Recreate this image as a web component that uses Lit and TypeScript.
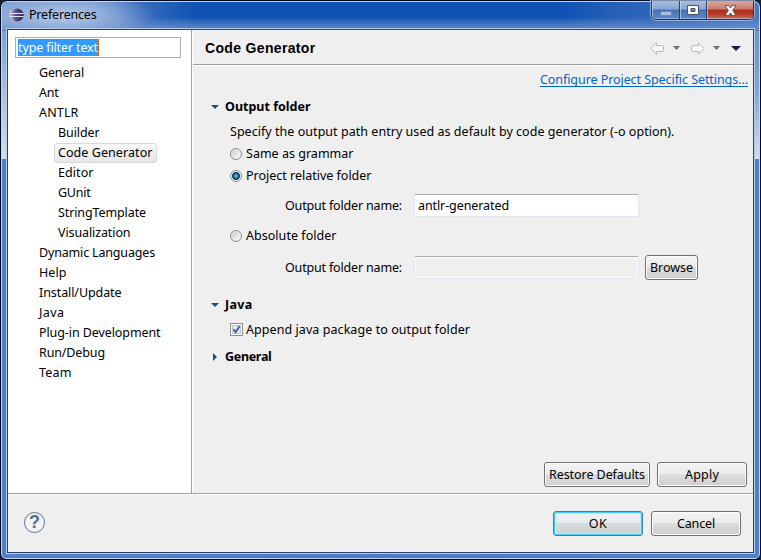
import { LitElement, html, css } from "lit";
import { customElement, property } from "lit/decorators.js";
import { classMap } from "lit/directives/class-map.js";

/** A single line of text whose tracking is adjusted to a given width. */
@customElement("fit-text")
class FitText extends LitElement {
  @property() text = "";
  @property({ type: Number }) w = 0;
  static styles = css`
    :host { display: inline-block; white-space: pre; }
    span { display: inline-block; }
  `;
  render() {
    return html`<span>${this.text}</span>`;
  }
  updated() {
    const s = this.renderRoot.querySelector("span") as HTMLElement;
    s.style.letterSpacing = "0px";
    const natural = s.getBoundingClientRect().width;
    if (natural && this.w) {
      s.style.letterSpacing = (this.w - natural) / this.text.length + "px";
    }
  }
}

const t = (text: string, w: number) => html`<fit-text .text=${text} .w=${w}></fit-text>`;

const tree: [string, number, number][] = [
  ["General", 45, 0], ["Ant", 19.5, 0], ["ANTLR", 39.5, 0], ["Builder", 41.5, 1],
  ["Code Generator", 94.5, 1], ["Editor", 35.5, 1], ["GUnit", 32.5, 1],
  ["StringTemplate", 88, 1], ["Visualization", 72.5, 1],
  ["Dynamic Languages", 116, 0], ["Help", 27.5, 0], ["Install/Update", 82.5, 0],
  ["Java", 25.5, 0], ["Plug-in Development", 121.5, 0], ["Run/Debug", 66, 0], ["Team", 32.5, 0],
];

const down = (cls: string, w: number, h: number) => html`
  <svg class=${cls} width=${w} height=${h} viewBox="0 0 ${w} ${h}">
    <path d="M0 0H${w}L${w / 2} ${h}Z" fill="currentColor" />
  </svg>`;

const navArrow = (flip: boolean) => html`
  <svg class="nav" width="15" height="13" viewBox="0 0 15 13">
    <path transform=${flip ? "translate(15 0) scale(-1 1)" : ""}
      d="M.8 6.5L6.5 .8V3.5H12.2Q13.5 3.5 13.5 4.8V8.2Q13.5 9.5 12.2 9.5H6.5V12.2Z"
      fill="#f6f6f2" stroke="#b9b9b3" />
  </svg>`;

@customElement("app-root")
class AppRoot extends LitElement {
  static styles = css`
    :host {
      display: block; width: 761px; height: 560px; overflow: hidden; background: #1a2238;
      font: 12.5px/20px "Noto Sans", "Open Sans", sans-serif; color: #000;
    }
    * { box-sizing: border-box; }
    svg { display: block; flex: none; }
    .frame {
      position: relative; height: 560px; padding: 0 6px 6px; border: 1px solid #000820;
      border-radius: 7px 7px 6px 6px; box-shadow: inset 0 0 0 1px #bfd6f2;
      background:
        linear-gradient(#7f9fd0 0, #a9bfe2 60px, #d2dff2 128px) 0 30px / 7px 128px no-repeat,
        linear-gradient(#6f93cc, #86a4d6 60px, #d2dff2 128px) 100% 30px / 7px 128px no-repeat,
        linear-gradient(90deg, #5081c8, #4a7bc4 50%, #5081c8);
    }
    .frame::before {
      content: ""; position: absolute; left: 1px; right: 1px; top: 1px; height: 28px;
      border-radius: 6px 6px 0 0;
      background:
        radial-gradient(ellipse 92px 24px at 62px 14px, rgba(185, 203, 232, .95), rgba(160, 185, 224, .65) 50%, transparent),
        linear-gradient(transparent 15px, rgba(110, 146, 205, .65) 24px, rgba(110, 146, 205, .65)),
        linear-gradient(90deg, #7f9fd2 0, #6d92cc 90px, #3d6fbe 135px, #0e52b3 195px, #0e52b3 560px, #2a62b8 620px, #2f69be 690px, #4678c4 100%);
    }
    .title { position: relative; display: flex; height: 28px; padding: 0 0 0 2px; align-items: center; gap: 5px; }
    .caption {
      display: flex; align-self: flex-start; margin: 0 0 0 auto; width: 103px; height: 19px;
      border: 1px solid #1d3460; border-top: 0; border-radius: 0 0 5px 5px; overflow: hidden;
      box-shadow: 0 0 0 1px rgba(190, 210, 240, .65);
    }
    .cap {
      display: flex; align-items: center; justify-content: center; width: 28px; border-right: 1px solid #26406f;
      background: linear-gradient(#a8bddc, #87a5d1 45%, #4671ae 50%, #5c89c7);
      box-shadow: inset 1px 0 rgba(210, 225, 245, .6), inset 0 -1px rgba(180, 205, 240, .6);
    }
    .cap.min svg { margin-top: 6px; }
    .cap.mid { width: 27px; }
    .cap.close {
      flex: 1; border: 0;
      background: linear-gradient(#dba79c, #cc7a6c 45%, #ad2c19 50%, #b73c28 75%, #cd705b);
    }
    .client {
      position: relative; display: flex; flex-direction: column; width: 747px; height: 524px;
      border: 1px solid #2a4269; background: #efefef; outline: 1px solid #b3cdec;
    }
    .main { display: flex; height: 463px; }
    .side { width: 184px; padding: 7px 7px 0; background: #fff; border-right: 1px solid #a0a0a0; }
    .filter { width: 166px; height: 21px; padding: 1px 0 0 2px; border: 1px solid #abadb3; display: flex; }
    .sel { height: 17px; line-height: 17px; background: #3399ff; color: #fff; border-right: 1px solid #c46a00; }
    .tree { padding-top: 5px; }
    .node { display: flex; height: 20px; padding-left: 20px; }
    .node span { height: 20px; padding: 0 4px; }
    .node.child { padding-left: 39px; }
    .node.on span {
      line-height: 18px; padding: 0 3px; border: 1px solid #d9d9d9; border-radius: 3px; background: linear-gradient(#f9f9f9, #e6e6e6);
    }
    .page { display: flex; flex-direction: column; flex: 1; border-left: 1px solid #fff; }
    .head { display: flex; align-items: center; height: 36px; padding: 0 12px; border-bottom: 1px solid #fff; box-shadow: inset 0 -1px #a0a0a0; }
    .head h1 { margin: 0; font: bold 14px/20px "Liberation Sans", Arial, sans-serif; }
    .nav-bar { display: flex; align-items: center; margin-left: auto; padding-top: 1px; }
    .nav { margin: 0 1px 0 -1px; }
    .t1 { color: #6e6e6e; margin: 0 11px 0 7px; }
    .t2 { color: #1d1b45; }
    .row { display: flex; align-items: center; padding-left: 37px; }
    .link { height: 27px; justify-content: flex-end; padding: 0 5px 2px 0; color: #0066cc; }
    .link fit-text { height: 16px; line-height: 17px; border-bottom: 1px solid #0066cc; }
    .sec { padding: 2px 0 0 18px; font-weight: bold; }
    .sec svg { color: #1b4c83; width: 8px; margin-right: 6px; }
    .h13 { height: 13px; } .h18 { height: 18px; } .h26 { height: 26px; } .h28 { height: 28px; }
    .h33 { height: 33px; } .h35 { height: 35px; } .h38 { height: 38px; } .h40 { height: 40px; }
    .field { padding-left: 92px; }
    .label { width: 129px; }
    .box { width: 225px; height: 23px; padding: 0 3px; line-height: 22px; background: #fff; border: 1px solid #e1e6ee; border-top-color: #abadb3; border-radius: 2px; }
    .box.off { background: #efefef; box-shadow: inset 0 0 0 1px #fafafa; }
    .radio {
      width: 12px; height: 12px; margin-right: 4px; border: 1px solid #8b8c8e; border-radius: 50%;
      background: linear-gradient(135deg, #bfc3c8, #f6f6f6 80%); box-shadow: inset 0 0 0 1px #f0f0f0;
    }
    .radio.on { background: radial-gradient(circle at 5px 5px, #9ae2ff 0, #2b85b8 1.7px, #0b3052 3.3px, #123b60 3.9px, #e9edf0 4.4px); }
    .check { width: 13px; height: 13px; margin-right: 3px; }
    .btn {
      display: flex; align-items: center; justify-content: center; height: 25px; border: 1px solid #707070; border-radius: 3px;
      background: linear-gradient(#f3f3f3, #ebebeb 48%, #dddddd 50%, #cfcfcf); box-shadow: inset 0 0 0 1px #fbfbfb;
    }
    .w53 { width: 53px; margin-left: 6px; } .w106 { width: 106px; } .w90 { width: 90px; }
    .ok { border-color: #3c7fb1; box-shadow: inset 0 0 0 1px #48cdf5, inset 0 0 0 2px #b8e4f3; background: linear-gradient(#f0f3f4, #e5ebed 48%, #d5dddf 50%, #cad3d4); }
    .actions { display: flex; justify-content: flex-end; gap: 7px; margin-top: auto; padding: 0 6px 6px 0; }
    .foot { display: flex; align-items: center; flex: 1; padding: 0 12px 0 16px; gap: 8px; border-top: 1px solid #a0a0a0; box-shadow: inset 0 1px #fff; }
    .foot .btn { padding-top: 1px; }
    .help {
      display: flex; justify-content: center; width: 21px; height: 21px; margin: 0 auto 2px 0; border: 1px solid #5b6f93; border-radius: 50%;
      font: bold 18px/19px "Liberation Sans", Arial, sans-serif; color: #566c92; background: #f3f3f3;
    }
  `;

  radio(on: boolean, text: string, w: number, cls: string) {
    return html`<div class="row ${cls}"><i class=${classMap({ radio: true, on })}></i>${t(text, w)}</div>`;
  }

  render() {
    return html`
      <div class="frame">
        <div class="title">
          <svg width="15" height="14" viewBox="0 0 15 14">
            <defs><linearGradient id="g" x1="0" x2="1"><stop offset="0" stop-color="#b3a3c4" /><stop offset=".4" stop-color="#5b4f8c" /><stop offset="1" stop-color="#2c2558" /></linearGradient></defs>
            <circle cx="6.4" cy="7" r="6.2" fill="#d3b7bd" />
            <circle cx="8.2" cy="7" r="6.5" fill="url(#g)" />
            <path d="M1.2 5.5H14.6M1 8.5H14.6" stroke="#dfe6f6" stroke-width="1" />
          </svg>
          ${t("Preferences", 67.5)}
          <div class="caption">
            <div class="cap min"><svg width="12" height="5"><rect x=".5" y=".5" width="11" height="4" fill="#a5bfe3" stroke="#6485b8" /></svg></div>
            <div class="cap mid"><svg width="12" height="10"><path fill-rule="evenodd" d="M.5.5H11.5V9.5H.5ZM4 3.5V6.5H8V3.5Z" fill="#fff" stroke="#46536e" /></svg></div>
            <div class="cap close"><svg width="13" height="11" viewBox="0 0 13 11"><path d="M1 .6H4.7L6.5 3L8.3 .6H12L8.7 5.4L12 10.4H8.3L6.5 7.9L4.7 10.4H1L4.3 5.4Z" fill="#fff" stroke="#5b4552" stroke-width=".9" /></svg></div>
          </div>
        </div>
        <div class="client">
          <div class="main">
            <div class="side">
              <div class="filter"><div class="sel">${t("type filter text", 80)}</div></div>
              <div class="tree">
                ${tree.map(([name, w, lvl]) => html`
                  <div class=${classMap({ node: true, child: lvl === 1, on: name === "Code Generator" })}><span>${t(name, w)}</span></div>`)}
              </div>
            </div>
            <div class="page">
              <div class="head">
                <h1>${t("Code Generator", 110.5)}</h1>
                <div class="nav-bar">
                  ${navArrow(false)}${down("t1", 7, 4)}${navArrow(true)}${down("t1", 7, 4)}${down("t2", 10, 5)}
                </div>
              </div>
              <div class="row link">${t("Configure Project Specific Settings...", 208)}</div>
              <div class="row sec h26">${down("", 8, 4)}${t("Output folder", 85.5)}</div>
              <div class="row h26">${t("Specify the output path entry used as default by code generator (-o option).", 444.5)}</div>
              ${this.radio(false, "Same as grammar", 107.5, "h18")}
              ${this.radio(true, "Project relative folder", 125.5, "h26")}
              <div class="row field h33"><div class="label">${t("Output folder name:", 117)}</div><div class="box">${t("antlr-generated", 91)}</div></div>
              ${this.radio(false, "Absolute folder", 90.5, "h28")}
              <div class="row field h35"><div class="label">${t("Output folder name:", 117)}</div><div class="box off"></div><div class="btn w53">${t("Browse", 43)}</div></div>
              <div class="row sec h38">${down("", 8, 4)}${t("Java", 27.5)}</div>
              <div class="row h13">
                <svg class="check" viewBox="0 0 13 13"><rect x=".5" y=".5" width="12" height="12" fill="#f6f6f6" stroke="#8e8f8f" /><rect x="2.5" y="2.5" width="8" height="8" fill="#e3e6ea" stroke="#c3c7cc" /><path d="M3.4 6.3L5.6 9.2L9.6 3" fill="none" stroke="#4059a0" stroke-width="1.9" /></svg>
                ${t("Append java package to output folder", 224)}
              </div>
              <div class="row sec h40"><svg width="8" height="8" viewBox="0 0 8 8"><path d="M2 0L6 4L2 8Z" fill="currentColor" /></svg>${t("General", 46.5)}</div>
              <div class="actions"><div class="btn w106">${t("Restore Defaults", 96)}</div><div class="btn w90">${t("Apply", 34)}</div></div>
            </div>
          </div>
          <div class="foot">
            <div class="help">?</div>
            <div class="btn w90 ok">${t("OK", 18.5)}</div>
            <div class="btn w90">${t("Cancel", 38)}</div>
          </div>
        </div>
      </div>`;
  }
}
